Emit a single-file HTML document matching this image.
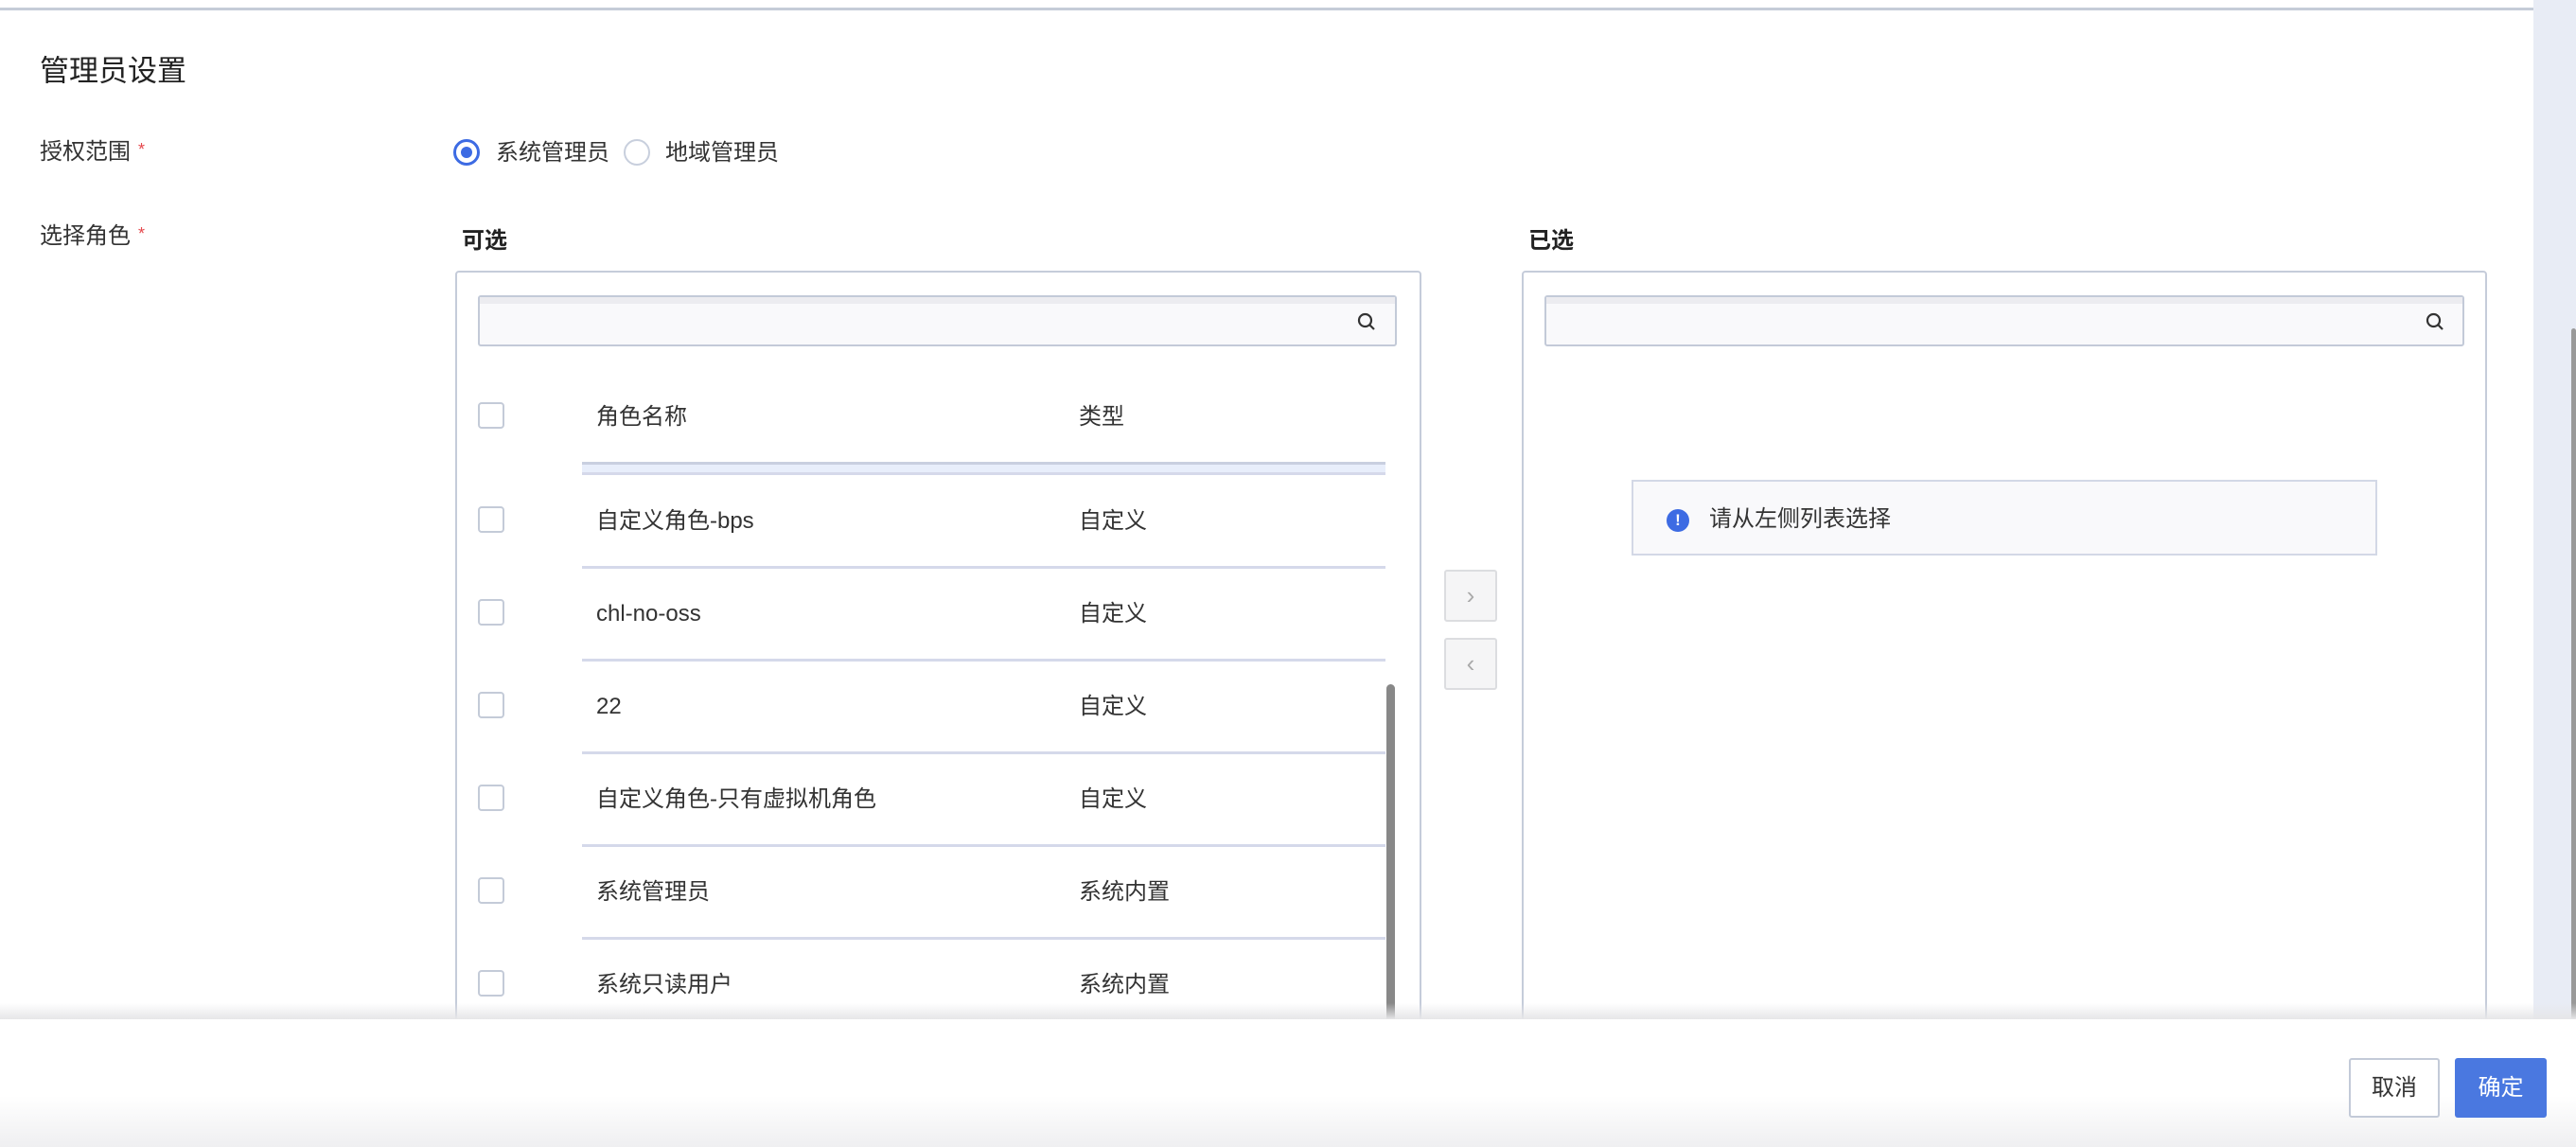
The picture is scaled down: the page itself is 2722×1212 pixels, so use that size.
<!DOCTYPE html>
<html><head><meta charset="utf-8"><style>
*{box-sizing:border-box;margin:0;padding:0}
body{width:2722px;height:1212px;position:relative;overflow:hidden;background:#fff;font-family:"Liberation Sans","Noto Sans CJK SC",sans-serif;color:#333;font-size:24px}
.a{position:absolute;white-space:nowrap}
.t{line-height:1;transform:translateY(-50%)}
.cb{position:absolute;width:28px;height:28px;border:2px solid #c4cbd8;border-radius:4px;background:#fff}
.div{position:absolute;left:615px;width:849px;height:3px;background:#d5d9ea}
.req{color:#e5484d;font-size:18px;margin-left:8px;vertical-align:top}
.srch{position:absolute;height:54px;border:2px solid #c3cad8;border-radius:3px;background:#f9f9fb}
.srch:before{content:"";position:absolute;left:0;right:0;top:0;height:7px;background:#ececf0}
</style></head><body>
<div class="a" style="left:0;top:8px;width:2722px;height:3px;background:#c5ccd8"></div>
<div class="a t" style="left:42px;top:75px;font-size:31px;color:#222">管理员设置</div>
<div class="a t" style="left:42px;top:161px">授权范围<span class="req">*</span></div>
<div class="a" style="left:479px;top:147px;width:28px;height:28px;border:3px solid #3d6be3;border-radius:50%"><div style="position:absolute;left:5px;top:5px;width:12px;height:12px;border-radius:50%;background:#3d6be3"></div></div>
<div class="a t" style="left:524px;top:162px">系统管理员</div>
<div class="a" style="left:659px;top:147px;width:28px;height:28px;border:2px solid #c8cfdd;border-radius:50%"></div>
<div class="a t" style="left:703px;top:162px">地域管理员</div>
<div class="a t" style="left:42px;top:250px">选择角色<span class="req">*</span></div>
<div class="a t" style="left:488px;top:255px;font-weight:bold;color:#222">可选</div>
<div class="a t" style="left:1615px;top:255px;font-weight:bold;color:#222">已选</div>

<div class="a" style="left:481px;top:286px;width:1021px;height:820px;border:2px solid #c5ccda;border-radius:4px"></div>
<div class="srch" style="left:505px;top:312px;width:971px"></div>
<svg class="a" style="left:1433px;top:329px" width="22" height="22" viewBox="0 0 22 22"><circle cx="9.5" cy="9.5" r="6.5" fill="none" stroke="#333" stroke-width="2.2"/><path d="M14 14l5 5" stroke="#333" stroke-width="2.2"/></svg>
<div class="cb" style="left:505px;top:425px"></div>
<div class="a t" style="left:630px;top:441px">角色名称</div>
<div class="a t" style="left:1140px;top:441px">类型</div>
<div class="a" style="left:615px;top:488px;width:849px;height:14px;background:#e8eefb;border-top:3px solid #c9cfe0;border-bottom:3px solid #d5d9ea"></div>

<div class="cb" style="left:505px;top:535px"></div><div class="a t" style="left:630px;top:551px">自定义角色-bps</div><div class="a t" style="left:1140px;top:551px">自定义</div>
<div class="div" style="top:598px"></div>
<div class="cb" style="left:505px;top:633px"></div><div class="a t" style="left:630px;top:649px">chl-no-oss</div><div class="a t" style="left:1140px;top:649px">自定义</div>
<div class="div" style="top:696px"></div>
<div class="cb" style="left:505px;top:731px"></div><div class="a t" style="left:630px;top:747px">22</div><div class="a t" style="left:1140px;top:747px">自定义</div>
<div class="div" style="top:794px"></div>
<div class="cb" style="left:505px;top:829px"></div><div class="a t" style="left:630px;top:845px">自定义角色-只有虚拟机角色</div><div class="a t" style="left:1140px;top:845px">自定义</div>
<div class="div" style="top:892px"></div>
<div class="cb" style="left:505px;top:927px"></div><div class="a t" style="left:630px;top:943px">系统管理员</div><div class="a t" style="left:1140px;top:943px">系统内置</div>
<div class="div" style="top:990px"></div>
<div class="cb" style="left:505px;top:1025px"></div><div class="a t" style="left:630px;top:1041px">系统只读用户</div><div class="a t" style="left:1140px;top:1041px">系统内置</div>
<div class="a" style="left:1465px;top:723px;width:9px;height:400px;background:#888;border-radius:5px"></div>

<div class="a" style="left:1526px;top:602px;width:56px;height:55px;border:2px solid #dcdde0;border-radius:3px;background:#f5f5f6;color:#aaa;text-align:center;line-height:50px;font-size:26px">›</div>
<div class="a" style="left:1526px;top:674px;width:56px;height:55px;border:2px solid #dcdde0;border-radius:3px;background:#f5f5f6;color:#aaa;text-align:center;line-height:50px;font-size:26px">‹</div>

<div class="a" style="left:1608px;top:286px;width:1020px;height:820px;border:2px solid #c5ccda;border-radius:4px"></div>
<div class="srch" style="left:1632px;top:312px;width:972px"></div>
<svg class="a" style="left:2562px;top:329px" width="22" height="22" viewBox="0 0 22 22"><circle cx="9.5" cy="9.5" r="6.5" fill="none" stroke="#333" stroke-width="2.2"/><path d="M14 14l5 5" stroke="#333" stroke-width="2.2"/></svg>
<div class="a" style="left:1724px;top:507px;width:788px;height:80px;border:2px solid #d3d8e6;background:#f9f9fb"></div>
<div class="a" style="left:1761px;top:538px;width:24px;height:24px;border-radius:50%;background:#3d6be3;color:#fff;font-size:17px;font-weight:bold;text-align:center;line-height:24px">!</div>
<div class="a t" style="left:1806px;top:549px">请从左侧列表选择</div>

<div class="a" style="left:2677px;top:0;width:45px;height:1077px;background:#e8ecf5"></div>
<div class="a" style="left:2717px;top:347px;width:5px;height:730px;background:#999;border-radius:3px"></div>

<div class="a" style="left:0;top:1060px;width:2722px;height:17px;background:linear-gradient(#fff0,#e6e6e8)"></div>
<div class="a" style="left:0;top:1077px;width:2722px;height:135px;background:linear-gradient(#fff 0%,#fff 60%,#efeff1 100%)"></div>
<div class="a" style="left:2482px;top:1118px;width:96px;height:63px;border:2px solid #c3cad8;border-radius:3px;background:#fff;text-align:center;line-height:59px">取消</div>
<div class="a" style="left:2594px;top:1118px;width:97px;height:63px;border-radius:3px;background:#4a78e0;color:#fff;text-align:center;line-height:63px">确定</div>
</body></html>
